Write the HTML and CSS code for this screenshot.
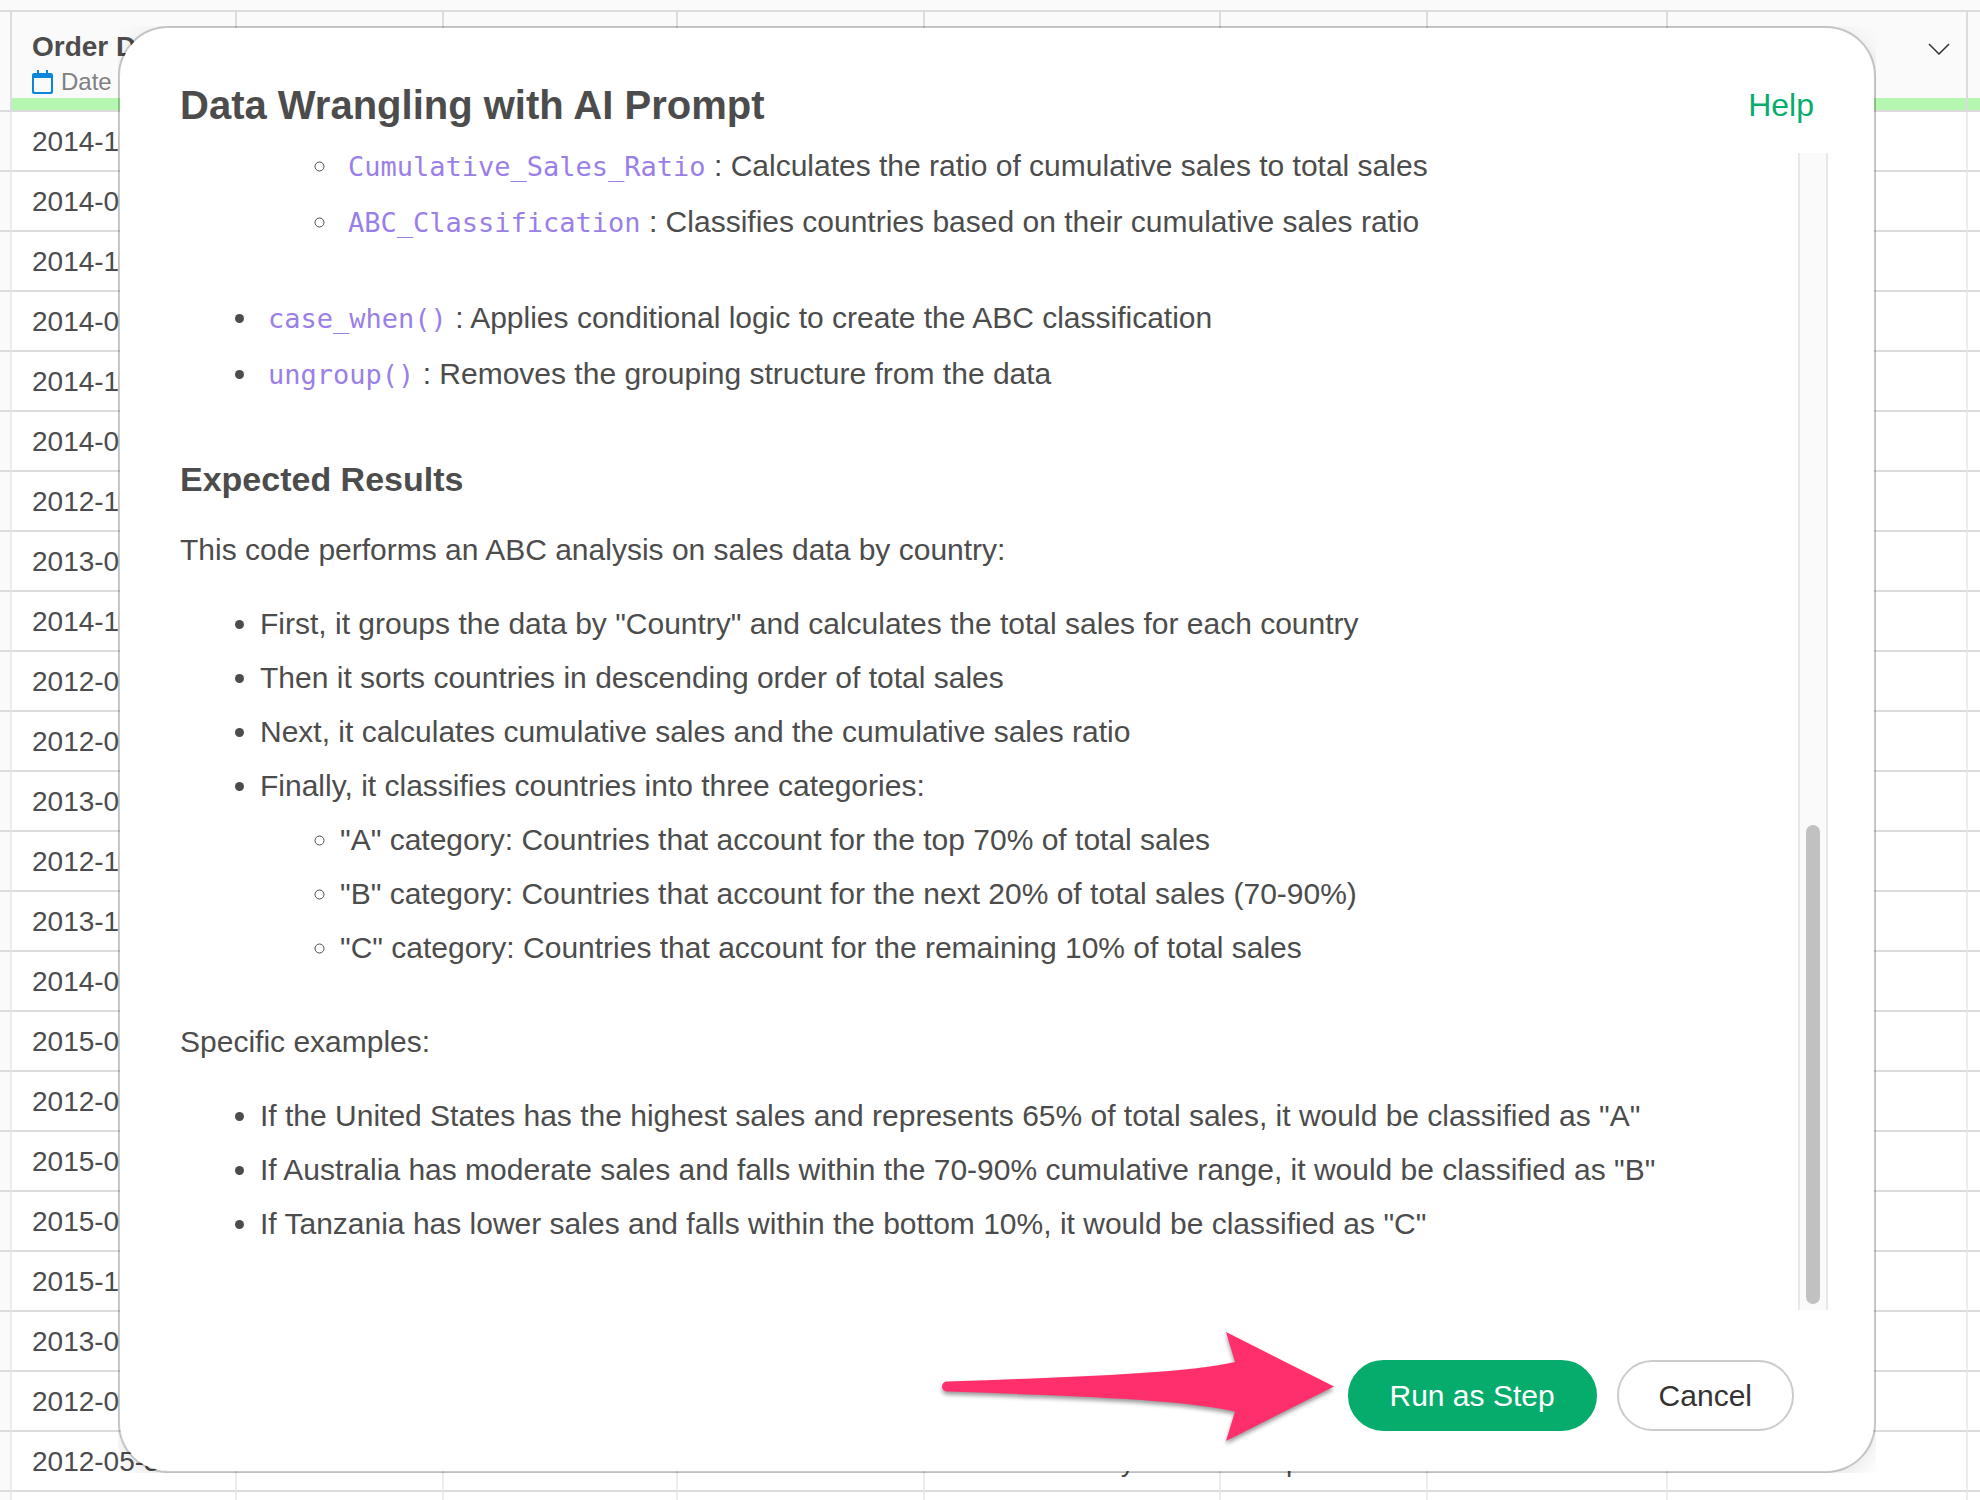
FILE: index.html
```html
<!DOCTYPE html>
<html lang="en">
<head>
<meta charset="utf-8">
<title>Data Wrangling with AI Prompt</title>
<link rel="stylesheet" href="styles.css">
</head>
<body>
<table class="grid">
  <colgroup>
    <col class="w-gutter"><col class="w-date"><col class="w-s"><col class="w-m"><col class="w-l"><col class="w-xl"><col class="w-s"><col class="w-n"><col class="w-menu"><col>
  </colgroup>
  <thead>
    <tr>
      <th></th>
      <th>
        <div class="col-name">Order Date</div>
        <div class="col-type">
          <svg class="calendar" viewBox="0 0 21 24" aria-hidden="true"><path d="M2 3H19a2 2 0 0 1 2 2V22a2 2 0 0 1-2 2H2a2 2 0 0 1-2-2V5a2 2 0 0 1 2-2ZM2 8V21a1 1 0 0 0 1 1H18a1 1 0 0 0 1-1V8Z" fill="#0b86d8" fill-rule="evenodd"/><path d="M5 0H7V4H5ZM14 0H16V4H14Z" fill="#0b86d8"/></svg>
          <span>Date</span>
        </div>
      </th>
      <th></th><th></th><th></th><th></th><th></th><th></th>
      <th>
        <button class="col-menu" aria-label="Column menu"><svg viewBox="0 0 22 12" aria-hidden="true"><path d="M1 1 11 11 21 1" fill="none" stroke="#333" stroke-width="1.500"/></svg></button>
      </th>
      <th></th>
    </tr>
  </thead>
  <tbody>
    <tr><td></td><td>2014-1</td><td></td><td></td><td></td><td></td><td></td><td></td><td></td><td></td></tr>
    <tr><td></td><td>2014-0</td><td></td><td></td><td></td><td></td><td></td><td></td><td></td><td></td></tr>
    <tr><td></td><td>2014-1</td><td></td><td></td><td></td><td></td><td></td><td></td><td></td><td></td></tr>
    <tr><td></td><td>2014-0</td><td></td><td></td><td></td><td></td><td></td><td></td><td></td><td></td></tr>
    <tr><td></td><td>2014-1</td><td></td><td></td><td></td><td></td><td></td><td></td><td></td><td></td></tr>
    <tr><td></td><td>2014-0</td><td></td><td></td><td></td><td></td><td></td><td></td><td></td><td></td></tr>
    <tr><td></td><td>2012-1</td><td></td><td></td><td></td><td></td><td></td><td></td><td></td><td></td></tr>
    <tr><td></td><td>2013-0</td><td></td><td></td><td></td><td></td><td></td><td></td><td></td><td></td></tr>
    <tr><td></td><td>2014-1</td><td></td><td></td><td></td><td></td><td></td><td></td><td></td><td></td></tr>
    <tr><td></td><td>2012-0</td><td></td><td></td><td></td><td></td><td></td><td></td><td></td><td></td></tr>
    <tr><td></td><td>2012-0</td><td></td><td></td><td></td><td></td><td></td><td></td><td></td><td></td></tr>
    <tr><td></td><td>2013-0</td><td></td><td></td><td></td><td></td><td></td><td></td><td></td><td></td></tr>
    <tr><td></td><td>2012-1</td><td></td><td></td><td></td><td></td><td></td><td></td><td></td><td></td></tr>
    <tr><td></td><td>2013-1</td><td></td><td></td><td></td><td></td><td></td><td></td><td></td><td></td></tr>
    <tr><td></td><td>2014-0</td><td></td><td></td><td></td><td></td><td></td><td></td><td></td><td></td></tr>
    <tr><td></td><td>2015-0</td><td></td><td></td><td></td><td></td><td></td><td></td><td></td><td></td></tr>
    <tr><td></td><td>2012-0</td><td></td><td></td><td></td><td></td><td></td><td></td><td></td><td></td></tr>
    <tr><td></td><td>2015-0</td><td></td><td></td><td></td><td></td><td></td><td></td><td></td><td></td></tr>
    <tr><td></td><td>2015-0</td><td></td><td></td><td></td><td></td><td></td><td></td><td></td><td></td></tr>
    <tr><td></td><td>2015-1</td><td></td><td></td><td></td><td></td><td></td><td></td><td></td><td></td></tr>
    <tr><td></td><td>2013-0</td><td></td><td></td><td></td><td></td><td></td><td></td><td></td><td></td></tr>
    <tr><td></td><td>2012-0</td><td></td><td></td><td></td><td></td><td></td><td></td><td></td><td></td></tr>
    <tr><td></td><td>2012-05-30</td><td>First Class</td><td>United States</td><td>Consumer</td><td>Charlotte Reilly</td><td>Corporate</td><td></td><td>Central</td><td></td></tr>
    <tr><td></td><td></td><td></td><td></td><td></td><td></td><td></td><td></td><td></td><td></td></tr>
  </tbody>
</table>

<div class="overlay">
  <div class="clip">
    <section class="dialog" role="dialog" aria-labelledby="dialog-title">
      <header class="dialog-head">
        <h1 id="dialog-title">Data Wrangling with AI Prompt</h1>
        <a class="help" href="#help">Help</a>
      </header>
      <div class="scroller">
        <div class="prose">
          <ul class="code-list nested">
            <li><code>Cumulative_Sales_Ratio</code> : Calculates the ratio of cumulative sales to total sales</li>
            <li><code>ABC_Classification</code> : Classifies countries based on their cumulative sales ratio</li>
          </ul>
          <ul class="code-list">
            <li><code>case_when()</code> : Applies conditional logic to create the ABC classification</li>
            <li><code>ungroup()</code> : Removes the grouping structure from the data</li>
          </ul>
          <h2>Expected Results</h2>
          <p>This code performs an ABC analysis on sales data by country:</p>
          <ul>
            <li>First, it groups the data by "Country" and calculates the total sales for each country</li>
            <li>Then it sorts countries in descending order of total sales</li>
            <li>Next, it calculates cumulative sales and the cumulative sales ratio</li>
            <li>Finally, it classifies countries into three categories:
              <ul>
                <li>"A" category: Countries that account for the top 70% of total sales</li>
                <li>"B" category: Countries that account for the next 20% of total sales (70-90%)</li>
                <li>"C" category: Countries that account for the remaining 10% of total sales</li>
              </ul>
            </li>
          </ul>
          <p>Specific examples:</p>
          <ul>
            <li>If the United States has the highest sales and represents 65% of total sales, it would be classified as "A"</li>
            <li>If Australia has moderate sales and falls within the 70-90% cumulative range, it would be classified as "B"</li>
            <li>If Tanzania has lower sales and falls within the bottom 10%, it would be classified as "C"</li>
          </ul>
        </div>
        <div class="track"><div class="thumb"></div></div>
      </div>
      <footer class="dialog-foot">
        <svg class="arrow" viewBox="0 0 400 116" aria-hidden="true"><path d="M5 49.500C120 45.500 240 42 293 30L284 0 392 54.500 284 109 293 79.500C240 67 120 63.500 5 59.500A5 5 0 0 1 5 49.500Z" fill="#ff2f6c"/></svg>
        <button class="btn btn-primary">Run as Step</button>
        <button class="btn">Cancel</button>
      </footer>
    </section>
  </div>
</div>
</body>
</html>
```
FILE: styles.css
```css
* { box-sizing: border-box; }

body {
  margin: 0;
  padding-top: 10px;
  height: 100vh;
  overflow: hidden;
  position: relative;
  background: #fafafa;
  color: #4c4c4c;
  font-family: "Liberation Sans", Arial, sans-serif;
  font-size: 28px;
}

/* Data grid behind the dialog */
.grid {
  width: 100%;
  table-layout: fixed;
  border-collapse: separate;
  border-spacing: 0;
  border-top: 2px solid #dcdcdc;
}
.w-gutter { width: 12px; }
.w-date { width: 225px; }
.w-s { width: 207px; }
.w-m { width: 234px; }
.w-l { width: 247px; }
.w-xl { width: 296px; }
.w-n { width: 240px; }
.w-menu { width: 300px; }

.grid th {
  height: 100px;
  padding: 18px 20px 0;
  vertical-align: top;
  text-align: left;
  font-weight: 400;
  border-right: 2px solid #dcdcdc;
  border-bottom: 2px solid #dcdcdc;
  background: linear-gradient(#b5f6b0, #b5f6b0) bottom / 100% 12px no-repeat #fafafa;
}
.grid td {
  height: 60px;
  padding: 2px 20px 0;
  line-height: 32px;
  white-space: nowrap;
  border-right: 2px solid #ececec;
  border-bottom: 2px solid #dcdcdc;
  background: #fff;
}
.grid th:first-child,
.grid td:first-child { padding: 0; background: #fafafa; }
.grid th:last-child,
.grid td:last-child { padding: 0; border-right: 0; }

.col-name { font-weight: 700; line-height: 34px; white-space: nowrap; }
.col-type {
  display: flex;
  align-items: center;
  gap: 8px;
  margin-top: 4px;
  font-size: 24px;
  line-height: 28px;
  color: #808080;
}
.calendar { width: 21px; height: 24px; }
.col-menu {
  display: block;
  margin: 13px -4px 0 auto;
  padding: 0;
  border: 0;
  background: none;
}
.col-menu svg { display: block; width: 22px; height: 12px; }

/* Dialog */
.overlay {
  position: absolute;
  inset: 26px 104px 27px 118px;
  display: flex;
}
.clip { flex: 1; display: flex; overflow: hidden; }
.dialog {
  flex: 1;
  display: flex;
  flex-direction: column;
  padding: 53px 46px 40px 60px;
  border: 2px solid rgba(0, 0, 0, 0.2);
  border-radius: 50px;
  background: #fff padding-box;
  box-shadow: 0 6px 24px rgba(0, 0, 0, 0.1);
}
.dialog-head {
  display: flex;
  justify-content: space-between;
  align-items: center;
  padding-right: 14px;
}
h1 { margin: 0; font-size: 40px; line-height: 48px; }
.help { color: #06ac6c; font-size: 32px; line-height: 40px; text-decoration: none; }

.scroller { flex: 1; display: flex; min-height: 0; margin-top: 24px; }
/* The list is scrolled part of the way past its first line */
.prose { flex: 1; margin-top: -15px; font-size: 30px; line-height: 54px; }
.prose h2 { margin: 50px 0 17px; font-size: 34px; line-height: 54px; }
.prose p { margin: 0 0 20px; }
.prose ul { margin: 0 0 40px; padding-left: 80px; }
.prose ul ul { margin: 0; }
.prose .code-list { line-height: 56px; }
.prose .nested { padding-left: 160px; list-style-type: circle; }
code {
  margin-left: 8px;
  font-family: "DejaVu Sans Mono", monospace;
  font-size: 27px;
  line-height: 32px;
  color: #9a7fe8;
}

.track {
  width: 30px;
  padding: 672px 6px 6px;
  display: flex;
  border: solid #e8e8e8;
  border-width: 0 2px;
  background: #fafafa;
}
.thumb { flex: 1; border-radius: 8px; background: #c1c1c1; }

.dialog-foot {
  display: flex;
  justify-content: flex-end;
  align-items: center;
  gap: 20px;
  margin-top: 50px;
  padding-right: 34px;
}
.arrow {
  width: 400px;
  height: 116px;
  margin: -29px -14px -17px 0;
  filter: drop-shadow(0 3px 2px rgba(0, 0, 0, 0.4));
}
.btn {
  height: 71px;
  padding: 0 40px;
  border: 2px solid #ccc;
  border-radius: 36px;
  background: #fff;
  color: #333;
  font: 30px "Liberation Sans", Arial, sans-serif;
}
.btn-primary { border-color: #06ac6c; background: #06ac6c; color: #fff; }
```
